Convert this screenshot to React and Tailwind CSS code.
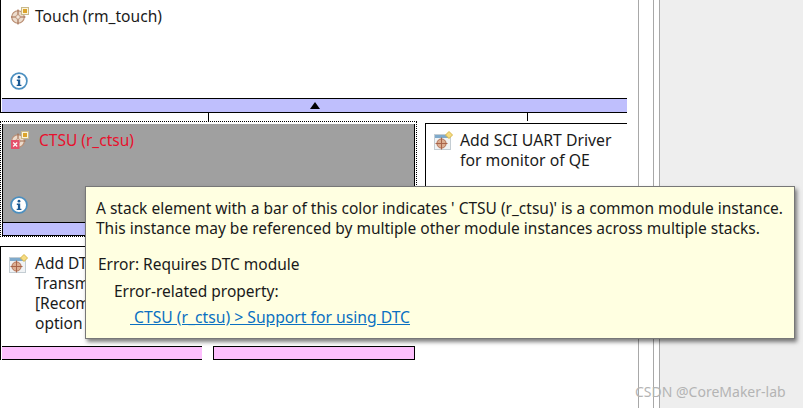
import React from "react";

const font = "font-['Noto_Sans',sans-serif]";

function InfoIcon() {
  return (
    <svg width="18" height="18" viewBox="0 0 18 18" className="block">
      <circle cx="9" cy="9" r="7.9" fill="#fff" stroke="#4b8fc0" strokeWidth="1.7" />
      <circle cx="9" cy="5.2" r="1.4" fill="#1b5a94" />
      <path d="M6.8 7.6h3.4v5.2h1.2v1.3H6.7v-1.3h1.2V8.9H6.8z" fill="#1b5a94" />
    </svg>
  );
}

function ModuleIcon({ error }) {
  return (
    <svg width="18" height="18" viewBox="0 0 18 18" className="block">
      <circle cx="7" cy="10" r="6.3" fill="#ecdccd" stroke="#b98d72" strokeWidth="1.1" />
      <path d="M7 2.5v15M-0.5 10h15" stroke="#a0694a" strokeWidth="1.1" />
      <circle cx="7" cy="10" r="2.2" fill="#f3e6da" stroke="#b98d72" strokeWidth="0.8" />
      <rect x="10.5" y="0.5" width="7" height="7" fill="#fbf4dc" stroke="#c9b98c" />
      <rect x="12" y="2" width="4" height="4" fill="#dca42b" />
      {error && <rect x="0" y="9" width="8.5" height="9" fill="#e4506a" />}
      {error && <path d="M2.2 11.5l4 4M6.2 11.5l-4 4" stroke="#fff" strokeWidth="1.2" />}
    </svg>
  );
}

function AddIcon() {
  return (
    <svg width="20" height="20" viewBox="0 0 20 20" className="block">
      <rect x="0.5" y="3.5" width="16" height="15" fill="#f0f3f5" stroke="#c4cdd3" />
      <rect x="1" y="4" width="15" height="3" fill="#7faacb" />
      <circle cx="7.5" cy="12.5" r="4.6" fill="#dcae92" stroke="#b06f52" />
      <path d="M7.5 6.5v12M1.5 12.5h12" stroke="#a9654a" />
      <path d="M15 0.5l3.5 3.5-3.5 3.5-3.5-3.5z" fill="#f6dc82" stroke="#d8b648" />
    </svg>
  );
}

export default function App() {
  return (
    <div className={`relative w-[803px] h-[408px] overflow-hidden bg-white flex ${font}`}>
      {/* Stack canvas */}
      <div className="w-[638px] shrink-0 h-full">
        {/* Touch stack */}
        <div className="w-[627px] h-[113px] border-l border-b border-black flex flex-col">
          <div className="flex-1 pl-[9px] pt-[6px] pb-[8px] flex flex-col justify-between">
            <div className="flex gap-[6px] items-start">
              <div className="pt-[1px] pl-[1px]"><ModuleIcon /></div>
              <span className="text-[15.6px] leading-[20px] text-[#1a1a1a] whitespace-nowrap">Touch (rm_touch)</span>
            </div>
            <InfoIcon />
          </div>
          <div className="h-[14px] ml-px border-t border-black bg-[#bfbffd] flex justify-center items-center">
            <div className="w-0 h-0 border-x-[5px] border-x-transparent border-b-[7px] border-b-black" />
          </div>
        </div>
        {/* Connectors */}
        <div className="w-[627px] h-[8px] flex">
          <div className="ml-[208px] w-px bg-black" />
          <div className="ml-[318px] w-px bg-black" />
        </div>
        {/* Second level */}
        <div className="flex items-start">
          <div className="w-[417px] h-[116px] shrink-0 border border-dotted border-black pt-[2px] px-px">
            <div className="h-full border-l border-r border-b border-black bg-[#a0a0a0] flex flex-col">
              <div className="flex-1 pl-[7px] pt-[6px] pb-[8px] flex flex-col justify-between">
                <div className="flex gap-[10px] items-start">
                  <div className="pt-[1px] pl-[1px]"><ModuleIcon error /></div>
                  <span className="text-[15.5px] leading-[20px] text-[#e8112d] whitespace-nowrap">CTSU (r_ctsu)</span>
                </div>
                <InfoIcon />
              </div>
              <div className="h-[13px] border-t border-black bg-[#bfbffd]" />
            </div>
          </div>
          <div className="mt-[2px] ml-[8px] w-[202px] h-[98px] border-t border-l border-black flex gap-[6px] pl-[8px] pt-[6px]">
            <div className="shrink-0 pt-[1px]"><AddIcon /></div>
            <div className="text-[15.8px] leading-[20px] text-[#1a1a1a] whitespace-pre">{"Add SCI UART Driver\nfor monitor of QE"}</div>
          </div>
        </div>
        {/* Third level */}
        <div className="mt-[9px] flex gap-[11px]">
          <div className="w-[202px] h-[114px] shrink-0 border-l border-t border-black flex flex-col">
            <div className="flex-1 flex gap-[6px] pl-[8px] pt-[6px]">
              <div className="shrink-0 pt-[1px]"><AddIcon /></div>
              {/* the tooltip covers the rest of this label, so only what shows is kept */}
              <div className="text-[15.5px] leading-[20px] text-[#1a1a1a] whitespace-pre">{"Add DT\nTransm\n[Recom\noption"}</div>
            </div>
            <div className="h-[14px] ml-px border-t border-b border-black bg-[#fdbffd]" />
          </div>
          <div className="w-[202px] h-[114px] shrink-0 flex flex-col justify-end">
            <div className="h-[14px] border border-black bg-[#fdbffd]" />
          </div>
        </div>
      </div>

      {/* Sash and editor gutter */}
      <div className="w-[15px] shrink-0 h-full border-l border-[#a8a8a8] bg-white" />
      <div className="w-[6px] shrink-0 h-full border-l border-[#a8a8a8] bg-white" />
      <div className="flex-1 h-full border-l border-[#a8a8a8] bg-[#eeeeee]" />

      {/* Tooltip */}
      <div className="absolute left-[85px] top-[186px] w-[710px] h-[153px] bg-[#ffffe1] border border-[#777] shadow-[2px_3px_4px_rgba(0,0,0,0.5)] pl-[10px] pt-[11px] text-[15.5px] leading-[20px] text-[#1a1a1a] whitespace-nowrap">
        <div>A stack element with a bar of this color indicates ' CTSU (r_ctsu)' is a common module instance.</div>
        <div>This instance may be referenced by multiple other module instances across multiple stacks.</div>
        <div className="mt-[16px] pl-[2px]">Error: Requires DTC module</div>
        <div className="mt-[7px] pl-[18px]">Error-related property:</div>
        <div className="mt-[6px] pl-[34px]">
          <a className="text-[15.7px] text-[#0a70c2] underline">&nbsp;CTSU (r_ctsu) &gt; Support for using DTC</a>
        </div>
      </div>

      {/* Watermark */}
      <div className="absolute left-[635px] top-[384px] text-[14px] leading-[16px] text-[#b4b4b4] whitespace-nowrap">CSDN @CoreMaker-lab</div>
    </div>
  );
}
